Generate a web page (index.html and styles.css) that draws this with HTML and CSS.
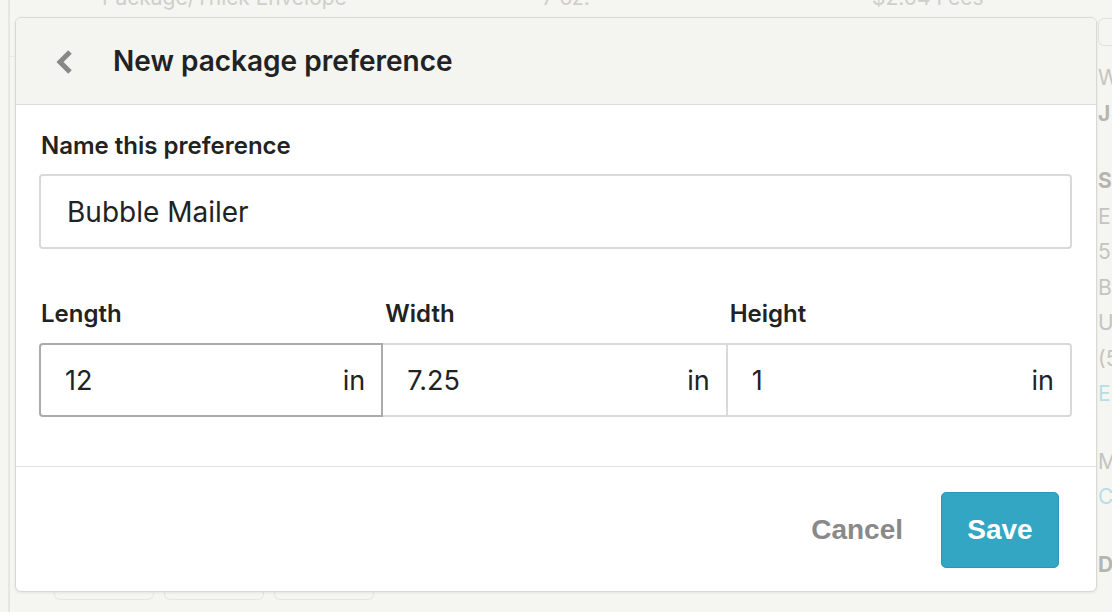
FILE: index.html
```html
<!DOCTYPE html>
<html lang="en">
<head>
  <meta charset="UTF-8" />
  <meta name="viewport" content="width=device-width, initial-scale=1.0" />
  <title>New package preference</title>
  <link rel="stylesheet" href="styles.css">
</head>
<body>
  <!-- faded page behind the dialog -->
  <div class="page">
    <div class="main">
      <div class="row">
        <span class="cell-name">Package/Thick Envelope</span>
        <span class="cell-weight">7 oz.</span>
        <span class="cell-price">$2.04 Fees</span>
      </div>
      <div class="bottom-tabs">
        <span></span><span></span><span></span>
      </div>
    </div>
    <div class="aside">
      <div class="aside-box"></div>
      <p>W</p>
      <p class="strong">J</p>
      <p class="gap strong">S</p>
      <p>E</p>
      <p>5</p>
      <p>B</p>
      <p>U</p>
      <p>(5</p>
      <p class="link">E</p>
      <p class="gap">M</p>
      <p class="link">C</p>
      <p class="gap strong">D</p>
    </div>
  </div>

  <div class="modal">
    <div class="modal-header">
      <button class="back" aria-label="Back">
        <svg width="20" height="26" viewBox="0 0 20 26">
          <polyline points="15,3 5,13 15,23" fill="none" stroke="#888" stroke-width="5" stroke-linejoin="miter" />
        </svg>
      </button>
      <h1>New package preference</h1>
    </div>

    <form class="modal-body">
      <label class="label" for="prefName">Name this preference</label>
      <input class="text-input" id="prefName" type="text" value="Bubble Mailer">

      <div class="dims-labels">
        <label for="len">Length</label>
        <label for="wid">Width</label>
        <label for="hei">Height</label>
      </div>
      <div class="dims">
        <div class="dim focused">
          <input id="len" type="text" value="12"><span>in</span>
        </div>
        <div class="dim">
          <input id="wid" type="text" value="7.25"><span>in</span>
        </div>
        <div class="dim">
          <input id="hei" type="text" value="1"><span>in</span>
        </div>
      </div>
    </form>

    <div class="modal-footer">
      <button class="btn-cancel" type="button">Cancel</button>
      <button class="btn-save" type="button">Save</button>
    </div>
  </div>
</body>
</html>
```

FILE: styles.css
```css
* {
  box-sizing: border-box;
  margin: 0;
  padding: 0;
}
body {
  background: #f5f5f1;
  font-family: 'Inter', 'Noto Sans', sans-serif;
  color: #222;
  width: 1112px;
  height: 612px;
  overflow: hidden;
  position: relative;
}

/* background page */
.page {
  display: flex;
  height: 612px;
  color: #cfcfca;
}
.main {
  flex: 1;
  display: flex;
  flex-direction: column;
  justify-content: space-between;
  border-left: 2px solid #e6e6e2;
  margin-left: 8px;
}
.row {
  display: flex;
  font-size: 21px;
  line-height: 22px;
  margin-top: -13px;
  padding-left: 92px;
  height: 70px;
  border-bottom: 1px solid #ebebe7;
}
.cell-name { width: 440px; }
.cell-weight { width: 330px; }
.bottom-tabs {
  display: flex;
  gap: 10px;
  padding-left: 44px;
  height: 10px;
  margin-bottom: 12px;
}
.bottom-tabs span {
  width: 100px;
  border: 1px solid #e6e6e2;
  border-top: none;
  border-radius: 0 0 6px 6px;
}
.aside {
  width: 14px;
  padding-top: 18px;
  font-size: 21px;
  line-height: 35.5px;
  color: #c4c4c0;
}
.aside-box {
  height: 28px;
  border: 1px solid #e3e3df;
  border-right: none;
  border-radius: 6px 0 0 6px;
  margin-bottom: 14px;
}
.aside p { white-space: nowrap; }
.aside .strong { font-weight: 700; color: #b5b5b1; }
.aside .link { color: #b9dde6; }
.aside .gap { margin-top: 32px; }

/* dialog */
.modal {
  position: absolute;
  left: 15px;
  top: 17px;
  width: 1082px;
  background: #fff;
  border: 1px solid #d8d8d4;
  border-radius: 6px;
  box-shadow: 0 1px 3px rgba(0, 0, 0, 0.08);
  overflow: hidden;
}
.modal-header {
  display: flex;
  align-items: center;
  height: 87px;
  background: #f4f4f0;
  border-bottom: 1px solid #dcdcd8;
  padding-left: 39px;
}
.back {
  background: none;
  border: none;
  width: 20px;
  height: 26px;
  margin-right: 38px;
  margin-top: 2px;
  cursor: pointer;
}
.modal-header h1 {
  font-size: 28px;
  font-weight: 600;
  line-height: 34px;
  color: #222;
}

.modal-body {
  padding: 26px 24px 49px 23px;
  border-bottom: 1px solid #e2e2de;
}
.label,
.dims-labels label {
  display: block;
  font-size: 24px;
  font-weight: 600;
  line-height: 30px;
  padding-left: 2px;
}
.label { margin-bottom: 13px; }
.text-input {
  display: block;
  width: 100%;
  height: 75px;
  border: 2px solid #d9d9d9;
  border-radius: 4px;
  padding: 0 26px;
  font-family: inherit;
  font-size: 28px;
  color: #222;
  outline: none;
}

.dims-labels {
  display: grid;
  grid-template-columns: repeat(3, minmax(0, 1fr));
  margin-top: 50px;
  margin-bottom: 14px;
}
.dims {
  display: grid;
  grid-template-columns: repeat(3, minmax(0, 1fr));
}
.dim {
  display: flex;
  align-items: center;
  min-width: 0;
  height: 74px;
  border: 2px solid #d9d9d9;
  border-left: none;
  padding: 0 16px 0 24px;
  font-size: 27px;
}
.dim:first-child {
  border-left: 2px solid #d9d9d9;
  border-radius: 4px 0 0 4px;
}
.dim:last-child { border-radius: 0 4px 4px 0; }
.dim.focused { border-color: #ababab; }
.dim input {
  flex: 1;
  width: 0;
  min-width: 0;
  border: none;
  outline: none;
  font-family: inherit;
  font-size: 27px;
  color: #222;
  background: transparent;
}
.dim span { color: #222; }

.modal-footer {
  display: flex;
  justify-content: flex-end;
  align-items: center;
  gap: 18px;
  padding: 25px 37px 23px 0;
}
.btn-cancel,
.btn-save {
  font-family: 'Liberation Sans', Arial, sans-serif;
  font-size: 28px;
  font-weight: 700;
  border: none;
  cursor: pointer;
}
.btn-cancel {
  background: none;
  color: #898989;
  padding: 0 20px;
  height: 76px;
}
.btn-save {
  width: 118px;
  height: 76px;
  background: #33a6c4;
  color: #fff;
  border-radius: 5px;
  border: 1px solid #2e97b3;
}
```
